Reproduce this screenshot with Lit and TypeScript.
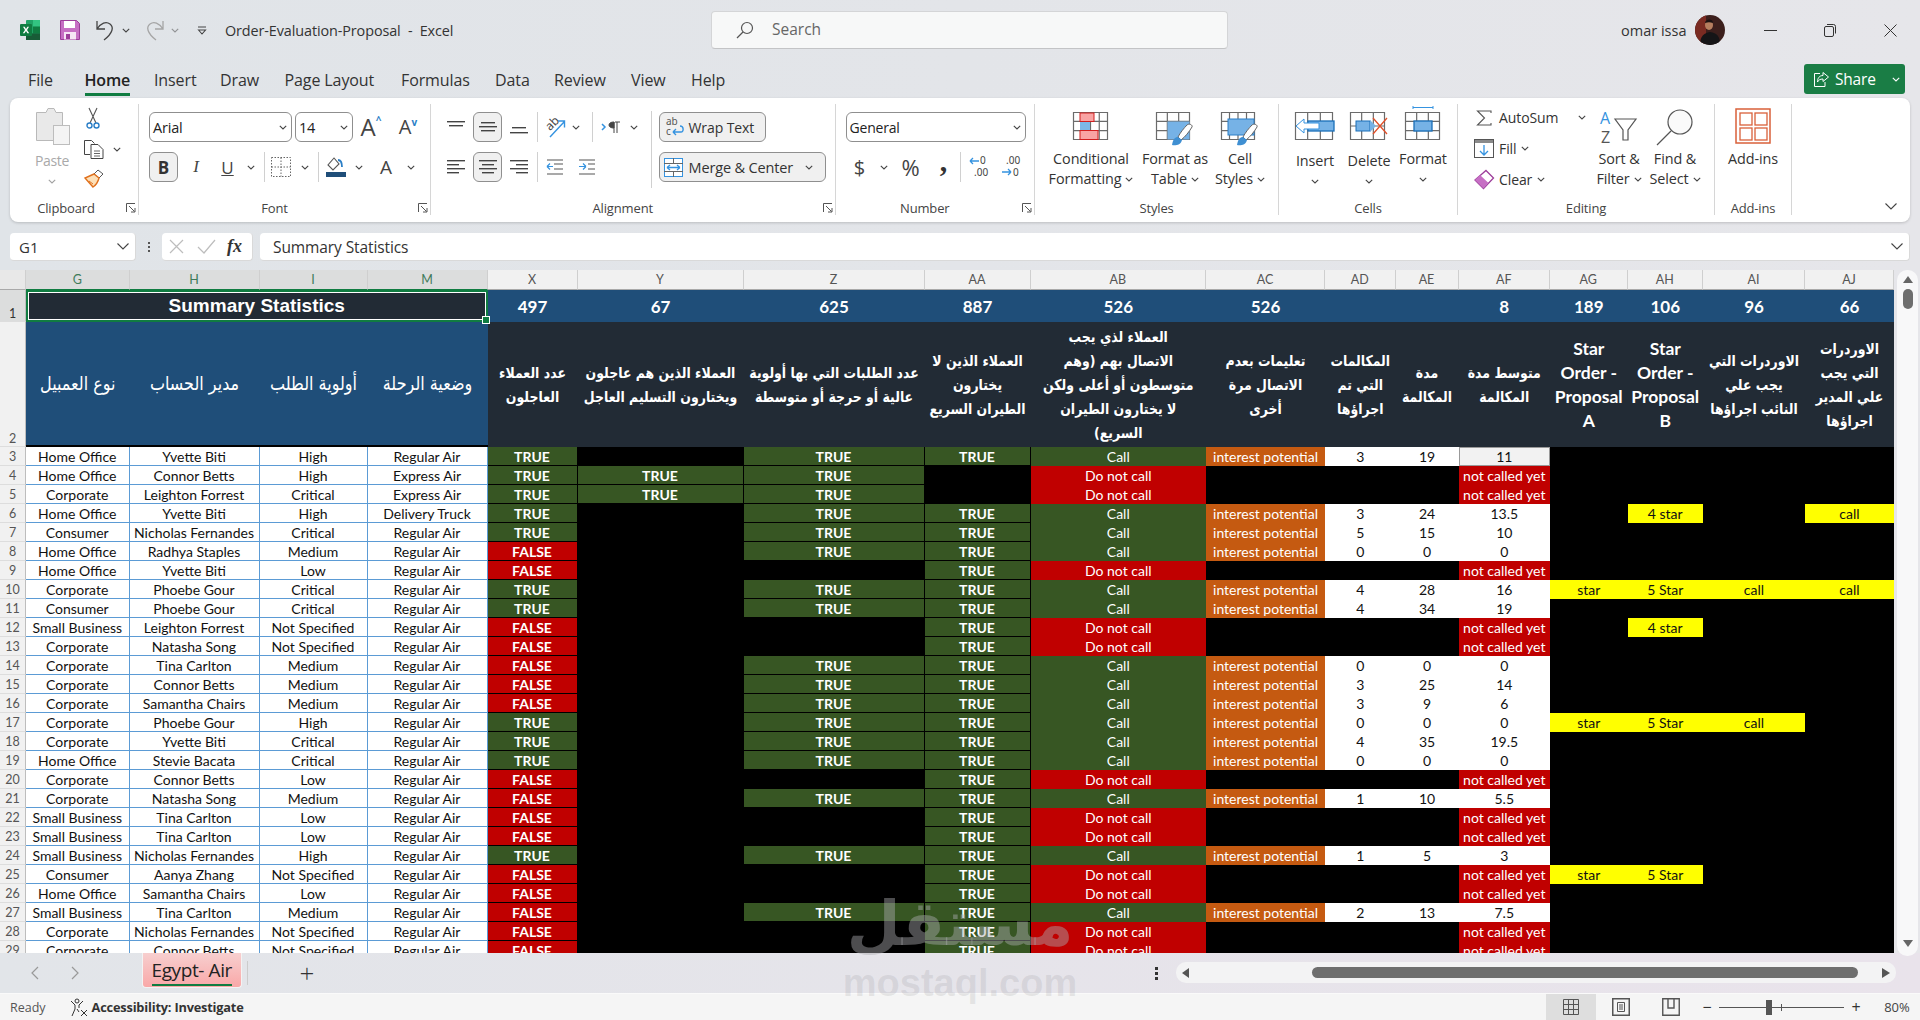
import { LitElement, css, html, svg } from "lit";
import { customElement } from "lit/decorators.js";

// one row of the sheet: [type, manager, priority, ship, X, Y, Z, AA, AB, calls, mins, avg, AG, AH, AI, AJ]
type Row = [string, string, string, string, number, number, number, number, number, string, string, string, string, string, string, string];

const R = "Regular Air";
const rows: Row[] = [
  ["Home Office", "Yvette Biti", "High", R, 1, 0, 1, 1, 1, "3", "19", "11", "", "", "", ""],
  ["Home Office", "Connor Betts", "High", "Express Air", 1, 1, 1, 0, 0, "", "", "", "", "", "", ""],
  ["Corporate", "Leighton Forrest", "Critical", "Express Air", 1, 1, 1, 0, 0, "", "", "", "", "", "", ""],
  ["Home Office", "Yvette Biti", "High", "Delivery Truck", 1, 0, 1, 1, 1, "3", "24", "13.5", "", "4 star", "", "call"],
  ["Consumer", "Nicholas Fernandes", "Critical", R, 1, 0, 1, 1, 1, "5", "15", "10", "", "", "", ""],
  ["Home Office", "Radhya Staples", "Medium", R, 0, 0, 1, 1, 1, "0", "0", "0", "", "", "", ""],
  ["Home Office", "Yvette Biti", "Low", R, 0, 0, 0, 1, 0, "", "", "", "", "", "", ""],
  ["Corporate", "Phoebe Gour", "Critical", R, 1, 0, 1, 1, 1, "4", "28", "16", "star", "5 Star", "call", "call"],
  ["Consumer", "Phoebe Gour", "Critical", R, 1, 0, 1, 1, 1, "4", "34", "19", "", "", "", ""],
  ["Small Business", "Leighton Forrest", "Not Specified", R, 0, 0, 0, 1, 0, "", "", "", "", "4 star", "", ""],
  ["Corporate", "Natasha Song", "Not Specified", R, 0, 0, 0, 1, 0, "", "", "", "", "", "", ""],
  ["Corporate", "Tina Carlton", "Medium", R, 0, 0, 1, 1, 1, "0", "0", "0", "", "", "", ""],
  ["Corporate", "Connor Betts", "Medium", R, 0, 0, 1, 1, 1, "3", "25", "14", "", "", "", ""],
  ["Corporate", "Samantha Chairs", "Medium", R, 0, 0, 1, 1, 1, "3", "9", "6", "", "", "", ""],
  ["Corporate", "Phoebe Gour", "High", R, 1, 0, 1, 1, 1, "0", "0", "0", "star", "5 Star", "call", ""],
  ["Corporate", "Yvette Biti", "Critical", R, 1, 0, 1, 1, 1, "4", "35", "19.5", "", "", "", ""],
  ["Home Office", "Stevie Bacata", "Critical", R, 1, 0, 1, 1, 1, "0", "0", "0", "", "", "", ""],
  ["Corporate", "Connor Betts", "Low", R, 0, 0, 0, 1, 0, "", "", "", "", "", "", ""],
  ["Corporate", "Natasha Song", "Medium", R, 0, 0, 1, 1, 1, "1", "10", "5.5", "", "", "", ""],
  ["Small Business", "Tina Carlton", "Low", R, 0, 0, 0, 1, 0, "", "", "", "", "", "", ""],
  ["Small Business", "Tina Carlton", "Low", R, 0, 0, 0, 1, 0, "", "", "", "", "", "", ""],
  ["Small Business", "Nicholas Fernandes", "High", R, 1, 0, 1, 1, 1, "1", "5", "3", "", "", "", ""],
  ["Consumer", "Aanya Zhang", "Not Specified", R, 0, 0, 0, 1, 0, "", "", "", "star", "5 Star", "", ""],
  ["Home Office", "Samantha Chairs", "Low", R, 0, 0, 0, 1, 0, "", "", "", "", "", "", ""],
  ["Small Business", "Tina Carlton", "Medium", R, 0, 0, 1, 1, 1, "2", "13", "7.5", "", "", "", ""],
  ["Corporate", "Nicholas Fernandes", "Not Specified", R, 0, 0, 0, 1, 0, "", "", "", "", "", "", ""],
  ["Corporate", "Connor Betts", "Not Specified", R, 0, 0, 0, 1, 0, "", "", "", "", "", "", ""],
];

const colNames = ["G", "H", "I", "M", "X", "Y", "Z", "AA", "AB", "AC", "AD", "AE", "AF", "AG", "AH", "AI", "AJ"];
const totals = ["497", "67", "625", "887", "526", "526", "", "", "8", "189", "106", "96", "66"];
const leftHeads = ["نوع العمبيل", "مدير الحساب", "أولوية الطلب", "وضعية الرحلة"];
const rightHeads: string[][] = [
  ["عدد العملاء", "العاجلون"],
  ["العملاء الذين هم عاجلون", "ويختارون التسليم العاجل"],
  ["عدد الطلبات التي بها أولوية", "عالية أو حرجة أو متوسطة"],
  ["العملاء الذين لا", "يختارون", "الطيران السريع"],
  ["العملاء لذي يجب", "الاتصال بهم (وهم", "متوسطون أو أعلى ولكن", "لا يختارون الطيران", "السريع)"],
  ["تعليمات بعدم", "الاتصال مرة", "أخرى"],
  ["المكالمات", "التي تم", "اجراؤها"],
  ["مدة", "المكالمة"],
  ["متوسط مدة", "المكالمة"],
  ["Star", "Order -", "Proposal", "A"],
  ["Star", "Order -", "Proposal", "B"],
  ["الاوردرات التي", "يجب علي", "النائب اجراؤها"],
  ["الاوردرات", "التي يجب", "علي المدير", "اجراؤها"],
];

const chev = html`<svg class="ch" width="8" height="5" viewBox="0 0 8 5"><path d="M.8.8 4 4 7.2.8" fill="none" stroke="#444" stroke-width="1.1"/></svg>`;
const launcher = html`<svg class="launch" width="10" height="10" viewBox="0 0 10 10"><path d="M.5 9V.5H9M3 3l5.5 5.5M5 9h4V5" fill="none" stroke="#555"/></svg>`;

const gridLines = (w: number, h: number, cols: number, rws: number) => {
  const xs = Array.from({ length: cols - 1 }, (_, i) => ((i + 1) * w) / cols);
  const ys = Array.from({ length: rws - 1 }, (_, i) => ((i + 1) * h) / rws);
  const d = xs.map((x) => `M${x} 0V${h}`).join("") + ys.map((y) => `M0 ${y}H${w}`).join("");
  return svg`<path d="M.5.5H${w - 0.5}V${h - 0.5}H.5Z${d}" fill="none" stroke="#6b6b6b" stroke-width="1.2"/>`;
};
const brush = svg`<path d="M31 13c-3 3-7 8-9 12l3 3c4-3 8-8 11-13 1-2-3-4-5-2Z" fill="#fff" stroke="#666"/><path d="M22 25c-3 0-5 2-6 8 3 1 9 0 10-5Z" fill="#3f8fd2"/>`;

const icons = {
  excel: html`<svg width="20" height="20" viewBox="0 0 20 20"><rect x="6" width="14" height="20" rx="1" fill="#21a366"/><rect x="13" width="7" height="6.6" fill="#33c481"/><rect x="13" y="6.6" width="7" height="6.8" fill="#107c41"/><rect x="6" y="13.4" width="14" height="6.6" fill="#185c37"/><rect y="4" width="12" height="12" rx="1" fill="#107c41"/><path d="m3 6.8 2 3.2-2.2 3.2h1.7L6 10.9l1.4 2.3h1.8L7 10l2-3.2H7.4L6 9 4.7 6.8Z" fill="#fff"/></svg>`,
  save: html`<svg width="20" height="20" viewBox="0 0 20 20"><path d="M.5.5h16l3 3v16H.5Z" fill="#c66fc4" stroke="#9c3d9a"/><rect x="4" y="1" width="11" height="7" fill="#fff"/><rect x="4" y="12" width="12" height="7.5" fill="#f6e5f5"/><rect x="6" y="14" width="4" height="5" fill="#9c3d9a"/></svg>`,
  undo: html`<svg width="20" height="22" viewBox="0 0 20 22"><path d="M1 2v8h8M1 10c4-6 9-8 13-5 4 3 3 9-6 16" fill="none" stroke="#444" stroke-width="1.3"/></svg>`,
  redo: html`<svg width="20" height="22" viewBox="0 0 20 22"><path d="M19 2v8h-8M19 10c-4-6-9-8-13-5-4 3-3 9 6 16" fill="none" stroke="#a5a5a5" stroke-width="1.3"/></svg>`,
  qat: html`<svg width="10" height="9" viewBox="0 0 10 9"><path d="M1 1h8M1.5 4 5 8l3.5-4Z" fill="none" stroke="#444" stroke-width="1.1"/></svg>`,
  search: html`<svg width="18" height="18" viewBox="0 0 18 18"><circle cx="11" cy="7" r="5.5" fill="none" stroke="#555" stroke-width="1.2"/><path d="M7 11 1 17" stroke="#555" stroke-width="1.2"/></svg>`,
  avatar: html`<svg width="30" height="30" viewBox="0 0 30 30"><defs><clipPath id="av"><ellipse cx="15" cy="15" rx="15" ry="15"/></clipPath></defs><g clip-path="url(#av)"><rect width="30" height="30" fill="#3c1f1c"/><rect width="11" height="30" fill="#7a2b22"/><path d="M5 30c0-9 4-12 10-13 7 1 10 4 10 13Z" fill="#151517"/><ellipse cx="14" cy="10" rx="4" ry="5" fill="#b57e5f"/><path d="M10 8c0-4 8-5 8 0-3-1-5-1-8 0Z" fill="#1b1111"/></g></svg>`,
  min: html`<svg width="13" height="3" viewBox="0 0 13 3"><path d="M0 1.5h13" stroke="#333" stroke-width="1"/></svg>`,
  restore: html`<svg width="12" height="13" viewBox="0 0 12 13"><rect x=".5" y="2.5" width="9" height="10" rx="1.5" fill="none" stroke="#333"/><path d="M3 .5h6.5a2 2 0 0 1 2 2v7" fill="none" stroke="#333"/></svg>`,
  close: html`<svg width="13" height="13" viewBox="0 0 13 13"><path d="m.5.5 12 12M12.5.5l-12 12" stroke="#333"/></svg>`,
  share: html`<svg width="15" height="16" viewBox="0 0 15 16"><path d="M9 1.5 14.5 6 9 10.5V8C6 8 4.5 9 3.5 11c0-4 2-6.5 5.5-6.5ZM6 2.5H.5v13H11V11" fill="none" stroke="#fff"/></svg>`,
  paste: html`<svg width="34" height="37" viewBox="0 0 34 37"><path d="M.5 4.5H10l2-4h6l2 4h6.5v28H.5Z" fill="#e9e9e9" stroke="#b9b9b9"/><rect x="17.5" y="17.5" width="16" height="19" fill="#f4f4f4" stroke="#bdbdbd"/></svg>`,
  cut: html`<svg width="14" height="21" viewBox="0 0 14 21"><path d="m3 0 7 15M11 0 4 15" stroke="#555" stroke-width="1.1"/><circle cx="3.5" cy="17.5" r="2.5" fill="none" stroke="#2b7fc7" stroke-width="1.4"/><circle cx="10.5" cy="17.5" r="2.5" fill="none" stroke="#2b7fc7" stroke-width="1.4"/></svg>`,
  copy: html`<svg width="20" height="19" viewBox="0 0 20 19"><path d="M6 14.5H.5V.5h7l3 3" fill="none" stroke="#444"/><path d="M7 4.5h7l5 5v9H7Z" fill="#fff" stroke="#444"/><path d="M10 11h6M10 13.5h6M10 16h6" stroke="#666"/></svg>`,
  painter: html`<svg width="20" height="18" viewBox="0 0 20 18"><path d="m14 0 5 4-4 4-5-4Z" fill="none" stroke="#555"/><path d="M10 4 1 8l8 9c3-2 5-5 6-9Z" fill="#fde0b8" stroke="#e0701c" stroke-width="1.4"/><path d="m5 11 4 3" stroke="#e0701c"/></svg>`,
  growA: html`<span class="glyph big">A<sup class="up">^</sup></span>`,
  shrinkA: html`<span class="glyph mid">A<sup class="dn">v</sup></span>`,
  borders: html`<svg width="20" height="20" viewBox="0 0 20 20"><path d="M.5.5h19v19H.5ZM10 .5v19M.5 10h19" fill="none" stroke="#666" stroke-dasharray="1.5 1.5"/></svg>`,
  fill: html`<svg width="20" height="20" viewBox="0 0 20 20"><path d="M8 1 2 8l5 5 6-6Z" fill="none" stroke="#555" stroke-width="1.1"/><path d="M12 3c3 0 4 2 4 7" fill="none" stroke="#2b7fc7" stroke-width="1.8"/><rect y="15" width="20" height="5" fill="#1f4e79"/></svg>`,
  orient: html`<svg width="22" height="22" viewBox="0 0 22 22"><text x="2" y="12" font-size="12" font-family="Noto Sans,sans-serif" fill="#444" transform="rotate(-45 8 9)">ab</text><path d="M6 21 20 6M14 5h6.5v6.5" fill="none" stroke="#3593e0" stroke-width="1.4"/></svg>`,
  rtl: html`<svg width="20" height="13" viewBox="0 0 20 13"><path d="m1 3 3 3-3 3" fill="none" stroke="#3593e0" stroke-width="1.5"/><path d="M14 1h5M13 1v11M16 1v11M13 1c-3 0-5 1-5 3s2 3 5 3Z" fill="#444" stroke="#444"/></svg>`,
  wrap: html`<svg width="20" height="20" viewBox="0 0 20 20"><text x="1" y="8" font-size="10" font-family="Noto Sans,sans-serif" fill="#555">ab</text><text x="1" y="18" font-size="10" font-family="Noto Sans,sans-serif" fill="#555">c</text><path d="M8 15h8c3 0 3-6-1-6M8 15l3-3M8 15l3 3" fill="none" stroke="#3593e0" stroke-width="1.4"/></svg>`,
  merge: html`<svg width="19" height="19" viewBox="0 0 19 19"><rect x=".5" y=".5" width="18" height="18" fill="#fff" stroke="#3593e0"/><path d="M0 5.5h19M0 13.5h19M9.5 0v5M9.5 14v5" stroke="#666"/><path d="M3 9.5h13M3 9.5 6 7M3 9.5 6 12M16 9.5 13 7M16 9.5 13 12" fill="none" stroke="#3593e0" stroke-width="1.3"/></svg>`,
  inc: html`<svg width="20" height="22" viewBox="0 0 20 22"><path d="M10 5H1M1 5l3-3M1 5l3 3" fill="none" stroke="#3593e0" stroke-width="1.3"/><text x="11" y="8" font-size="10" fill="#444" font-family="Noto Sans,sans-serif">0</text><text x="5" y="20" font-size="10" fill="#444" font-family="Noto Sans,sans-serif">.00</text></svg>`,
  dec: html`<svg width="20" height="22" viewBox="0 0 20 22"><text x="5" y="8" font-size="10" fill="#444" font-family="Noto Sans,sans-serif">.00</text><path d="M1 16h9M10 16l-3-3M10 16l-3 3" fill="none" stroke="#3593e0" stroke-width="1.3"/><text x="12" y="20" font-size="10" fill="#444" font-family="Noto Sans,sans-serif">0</text></svg>`,
  cond: html`<svg width="36" height="28" viewBox="0 0 36 28">${gridLines(35, 28, 4, 3)}<rect x="7" y="1" width="14" height="8.5" fill="#f9a3a3" stroke="#d21f1f"/><rect x="7" y="10" width="10" height="8.5" fill="#7db8e8"/><rect x="7" y="18.5" width="18" height="9" fill="#f9a3a3" stroke="#d21f1f"/></svg>`,
  table: html`<svg width="38" height="34" viewBox="0 0 38 34">${gridLines(34, 28, 3, 3)}<rect x="11.5" y="9.5" width="22" height="18" fill="#76b2e6"/>${brush}</svg>`,
  styles: html`<svg width="38" height="34" viewBox="0 0 38 34">${gridLines(34, 28, 4, 3)}<rect x="7" y="7" width="26" height="16" fill="#76b2e6" stroke="#2b7fc7"/>${brush}</svg>`,
  insert: html`<svg width="40" height="28" viewBox="0 0 40 28">${gridLines(38, 28, 3, 2)}<rect x="13" y="9" width="26" height="10" fill="#76b2e6" stroke="#1a6fb8" stroke-width="1.3"/><path d="M24 11H9V7L1 14l8 7v-4h15Z" fill="#fff" stroke="#3593e0"/></svg>`,
  del: html`<svg width="38" height="28" viewBox="0 0 38 28">${gridLines(35, 28, 3, 2)}<rect x="6" y="9" width="14" height="10" fill="#76b2e6" stroke="#1a6fb8"/><path d="M20 11V8l6 6-6 6v-3" fill="#76b2e6"/><path d="m23 6 14 16M37 6 23 22" stroke="#e2512a" stroke-width="1.3"/></svg>`,
  format: html`<svg width="36" height="34" viewBox="0 0 36 34"><path d="M8 1.5h20M8 0v3M28 0v3" stroke="#3593e0" fill="none"/><g transform="translate(0 6)">${gridLines(35, 28, 3, 3)}</g><rect x="9" y="15" width="18" height="10" fill="#76b2e6" stroke="#1a6fb8" stroke-width="1.3"/></svg>`,
  sum: html`<svg width="16" height="16" viewBox="0 0 16 16"><path d="M15 3V1H1.500l7 7-7 7H15v-2" fill="none" stroke="#555" stroke-width="1.1"/></svg>`,
  fillDown: html`<svg width="20" height="19" viewBox="0 0 20 19"><rect x=".5" y=".5" width="19" height="18" fill="#fff" stroke="#555"/><rect x="1" y="1" width="18" height="3" fill="#8a8a8a"/><path d="M10 6v10M6 12l4 4 4-4" fill="none" stroke="#3593e0" stroke-width="1.3"/></svg>`,
  clear: html`<svg width="20" height="19" viewBox="0 0 20 19"><path d="m12 .5 7.5 7.5-10 10.5L1 10Z" fill="#fff" stroke="#9c3d9a" stroke-width="1.3"/><path d="M1 10l5-5 8.5 8-5 5.5Z" fill="#c66fc4"/></svg>`,
  sort: html`<svg width="38" height="34" viewBox="0 0 38 34"><text x="0" y="14" font-size="16" font-family="Open Sans,sans-serif" fill="#3593e0">A</text><text x="1" y="33" font-size="16" font-family="Open Sans,sans-serif" fill="#555">Z</text><path d="M15 9h21l-8 11v10h-5V20Z" fill="none" stroke="#555" stroke-width="1.2"/></svg>`,
  find: html`<svg width="38" height="36" viewBox="0 0 38 36"><circle cx="24" cy="13" r="12" fill="#fafafa" stroke="#555" stroke-width="1.2"/><path d="M15 22 1 36" stroke="#555" stroke-width="1.2"/></svg>`,
  addins: html`<svg width="36" height="36" viewBox="0 0 36 36"><rect x="1" y="1" width="34" height="34" fill="none" stroke="#d9603a" stroke-width="1.5"/><rect x="5" y="5" width="12" height="12" fill="none" stroke="#d9603a" stroke-width="1.3"/><rect x="20" y="5" width="12" height="12" fill="none" stroke="#d9603a" stroke-width="1.3"/><rect x="5" y="20" width="12" height="12" fill="none" stroke="#d9603a" stroke-width="1.3"/><rect x="20" y="20" width="12" height="12" fill="none" stroke="#d9603a" stroke-width="1.3"/></svg>`,
  collapse: html`<svg width="12" height="7" viewBox="0 0 12 7"><path d="m.5.5 5.5 5.5L11.500.5" fill="none" stroke="#444" stroke-width="1.1"/></svg>`,
  cancel: html`<svg width="15" height="15" viewBox="0 0 15 15"><path d="m1 1 13 13M14 1 1 14" stroke="#bdbdbd" stroke-width="1.2"/></svg>`,
  enter: html`<svg width="19" height="15" viewBox="0 0 19 15"><path d="m1 8 6 6L18 1" fill="none" stroke="#bdbdbd" stroke-width="1.2"/></svg>`,
  a11y: html`<svg width="18" height="19" viewBox="0 0 18 19"><circle cx="7" cy="3" r="2" fill="none" stroke="#333"/><path d="M1 3l4 4v4l-3 7M13 3 9 7v3M7 11l2 3M11 12l6 6M17 12l-6 6" fill="none" stroke="#333"/></svg>`,
  viewNormal: html`<svg width="16" height="16" viewBox="0 0 16 16"><path d="M.5.5h15v15H.5ZM5.5.5v15M10.5.5v15M.5 5.5h15M.5 10.5h15" fill="none" stroke="#555"/></svg>`,
  viewPage: html`<svg width="18" height="18" viewBox="0 0 18 18"><rect x=".75" y=".75" width="16.5" height="16.5" fill="none" stroke="#555" stroke-width="1.5"/><path d="M5.5 4.5h7v9h-7ZM7 7h4M7 9h4M7 11h4" fill="none" stroke="#555"/></svg>`,
  viewBreak: html`<svg width="18" height="18" viewBox="0 0 18 18"><path d="M.75 0v17.25h16.5V0M.75.75h16.5M6 .75V10h6V.75" fill="none" stroke="#555" stroke-width="1.4"/></svg>`,
};

const align = (lines: number[][]) =>
  html`<svg width="20" height="18" viewBox="0 0 20 18">${lines.map(
    ([x, y, w]) => svg`<rect x=${x} y=${y} width=${w} height="1.4" fill="#444"></rect>`
  )}</svg>`;

@customElement("app-root")
export class AppRoot extends LitElement {
  static styles = css`
    :host {
      display: block;
      position: relative;
      width: 1920px;
      height: 1020px;
      overflow: hidden;
      background: linear-gradient(90deg, #e0e4e8, #e6e6ea);
      font-family: "Open Sans", "Noto Sans", sans-serif;
      color: #333;
      font-size: 13px;
    }
    svg { display: block; flex: none; overflow: visible; }

    /* title bar */
    .title { height: 60px; display: flex; align-items: center; padding-left: 20px; }
    .title .save { margin-left: 20px; }
    .title .undo { margin-left: 16px; }
    .title .und-ch { margin-left: 6px; }
    .title .redo { margin-left: 14px; }
    .title .red-ch { margin-left: 7px; opacity: 0.5; }
    .title .qat { margin-left: 18px; }
    .doc { margin-left: 18px; width: 486px; font-size: 14.4px; white-space: pre; letter-spacing: -0.1px; }
    .search {
      width: 517px; height: 38px; box-sizing: border-box; background: #f7f8f8;
      border: 1px solid #d4d5d7; border-bottom-color: #c3c4c6; border-radius: 4px;
      display: flex; align-items: center; padding-left: 24px; gap: 18px;
      color: #666; font-size: 15.5px; line-height: 34px;
    }
    .search span { margin-top: -2px; }
    .user { margin-left: auto; display: flex; align-items: center; }
    .user .name { font-size: 14.5px; width: 74px; white-space: nowrap; }
    .user .win { width: 60px; display: flex; justify-content: center; }
    .user .avatar { margin-right: 15px; }

    /* tabs */
    .tabs { height: 38px; display: flex; align-items: center; padding-left: 28px; }
    .tablist { display: grid; grid-template-columns: 56.5px 69.5px 66px 64.5px 116.5px 94px 59px 77px 60px 40px; height: 38px; flex: none; }
    .tab { font-size: 16px; line-height: 40px; letter-spacing: -0.1px; white-space: nowrap; }
    .tab.on { font-weight: 600; color: #222; letter-spacing: -0.2px; }
    .tab.on span { display: inline-block; height: 33px; border-bottom: 3px solid #107c41; line-height: 40px; }
    .sharewrap { margin-left: auto; margin-right: 15px; }
    .share {
      width: 101px; height: 30px; border-radius: 3px; background: #1a7d45; color: #fff;
      display: flex; align-items: center; padding-left: 10px; box-sizing: border-box;
      gap: 6px; font-size: 15.5px; letter-spacing: -0.2px;
    }
    .share .ch { margin-left: 10px; }
    .share .ch path { stroke: #fff; }

    /* ribbon */
    .ribbon {
      margin: 0 10px; height: 124px; background: #fff; border-radius: 8px;
      box-shadow: 0 1px 3px rgba(0, 0, 0, 0.18); display: flex; padding-top: 6px;
      box-sizing: border-box;
    }
    .group {
      height: 111px; box-sizing: border-box; border-right: 1px solid #d6d6d6;
      display: flex; flex-direction: column; flex: none;
    }
    .gbody { height: 97px; box-sizing: border-box; padding-top: 8px; display: flex; }
    .glabel { height: 14px; display: flex; align-items: center; font-size: 13px; line-height: 14px; letter-spacing: -0.15px; color: #444; margin-top: 2px; }
    .glabel span { flex: 1; text-align: center; }
    .launch { margin-right: 2px; }
    .clip { width: 129px; } .font { width: 292px; } .alignment { width: 404.5px; }
    .number { width: 199.5px; } .stylesg { width: 244px; } .cells { width: 179px; }
    .editing { width: 257px; } .addins { width: 77px; }
    .clip .glabel span { padding-right: 4px; }
    .font .glabel span, .alignment .glabel span, .number .glabel span { padding-right: 8px; }

    .clip .gbody { padding: 4px 0 0 27px; gap: 12px; }
    .pastecol { width: 34px; display: flex; flex-direction: column; align-items: center; color: #a9a9a9; margin-left: -2px; }
    .pastecol svg:first-child { margin-left: 2px; }
    .pastecol .lbl { font-size: 14px; margin-top: 6px; letter-spacing: -0.3px; }
    .pastecol .ch { margin-top: 9px; opacity: 0.5; }
    .clipcol { display: flex; flex-direction: column; gap: 11px; padding-left: 3px; }
    .clipcol .cut { margin-left: 2px; }
    .clipcol div { display: flex; align-items: center; gap: 9px; }

    .rows { display: flex; flex-direction: column; gap: 10px; }
    .row { display: grid; height: 30px; align-items: center; justify-items: center; }
    .select {
      height: 30px; box-sizing: border-box; width: 100%; border: 1px solid #8f8f8f; border-radius: 6px;
      background: #fff; display: flex; align-items: center; padding: 0 4px 0 3px;
      justify-content: space-between; font-size: 14.5px; color: #222; letter-spacing: -0.2px;
    }
    .pressed {
      width: 100%; height: 30px; box-sizing: border-box; border: 1px solid #8f8f8f;
      border-radius: 6px; background: #f0f0f0; display: flex; align-items: center; justify-content: center;
    }
    .sep { width: 1px; height: 30px; background: #d0d0d0; }
    .font .gbody { padding-left: 10px; }
    .font .r1 { grid-template-columns: 143px 61px 36px 38px; column-gap: 0; width: 278px; }
    .font .r1 .select:nth-child(2) { margin-left: 3px; width: calc(100% - 3px); }
    .font .r2 { grid-template-columns: 29px 36px 27px 20px 6px 28px 20px 6px 30px 16px 38px 12px; }
    .glyph { font-family: "Open Sans", sans-serif; color: #444; line-height: 1; }
    .big { font-size: 24px; } .mid { font-size: 20px; } .b { font-weight: 700; font-size: 17px; color: #333; }
    .glyph sup { font-size: 10px; color: #2b7fc7; vertical-align: top; font-weight: 700; line-height: 1; }
    .ital { font-style: italic; font-size: 17px; font-family: "Liberation Serif", serif; color: #444; }
    .under { font-size: 17px; text-decoration: underline; color: #444; }
    .fa { font-size: 19px; color: #444; }

    .alignment .gbody { padding-left: 14px; }
    .alignment .r1 { grid-template-columns: 22px 6px 29px 34px 2px 34px 8px 12px 1px 35px 12px; width: 206px; }
    .alignment .r2 { grid-template-columns: 22px 6px 29px 34px 2px 34px 30px; width: 206px; }
    .vsep { width: 1px; height: 77px; background: #d0d0d0; margin: -1px 6.5px 0 0; align-self: flex-start; }
    .alignbtn { width: 107px; padding: 0 6px 0 5px; gap: 4px; justify-content: flex-start; font-size: 14px; letter-spacing: -0.1px; color: #333; white-space: nowrap; }
    .alignbtn.wide { width: 167px; padding-left: 4px; gap: 6px; font-size: 14.5px; letter-spacing: -0.15px; }
    .alignbtn.wide .ch { margin-left: auto; margin-right: 6px; }

    .number .gbody { padding-left: 10px; }
    .number .select { width: 180px; font-size: 14px; }
    .number .r2 { grid-template-columns: 28px 20px 34px 32px 2px 34px 30px; }
    .dollar { font-size: 20px; color: #444; }
    .percent { font-size: 22px; color: #444; }
    .comma { font-size: 30px; color: #333; font-weight: 700; line-height: 0.7; font-family: "Liberation Serif", serif; margin-top: -14px; }

    .bigbtn { display: flex; flex-direction: column; align-items: center; flex: none; font-size: 14.4px; line-height: 20px; letter-spacing: -0.1px; color: #333; white-space: nowrap; }
    .bigbtn .ico { height: 37px; display: flex; align-items: flex-start; justify-content: center; }
    .bigbtn .t { display: flex; align-items: center; gap: 4px; }
    .bigbtn .t.lone { height: 20px; }
    .stylesg .gbody { padding-left: 13px; }
    .s1 { width: 86px; } .s2 { width: 82px; } .s3 { width: 48px; }
    .cells .gbody { padding-left: 9px; }
    .cells .bigbtn { width: 54px; }
    .cells .ins .ico { height: 39px; }
    .cells .fmt .ico { margin-top: -6px; height: 43px; }
    .editing .gbody { padding: 0 0 0 16px; }
    .editcol { width: 121px; display: flex; flex-direction: column; margin-top: -2px; }
    .editcol div { height: 31px; display: flex; align-items: center; font-size: 14px; letter-spacing: -0.1px; color: #333; }
    .editcol svg:first-child { margin-right: 5px; }
    .editcol .autosum svg:first-child { margin-left: 2px; margin-right: 7px; }
    .editcol .autosum .ch { margin-left: 20px; }
    .editcol .ch { margin-left: 5px; }
    .e1 { width: 48px; padding-top: 6px; } .e2 { width: 50px; margin-left: 7px; padding-top: 5px; }
    .e1 .ico { height: 39px; } .e2 .ico { height: 40px; }
    .addins .gbody { padding: 4px 0 0 0; justify-content: center; }
    .addins .bigbtn .ico { height: 41px; }
    .collapse { margin: auto 13px 12px auto; align-self: flex-end; }

    /* formula bar */
    .fbar { margin: 11px 10px 9px; height: 28px; display: flex; }
    .namebox, .fnbox, .fx {
      background: #fff; border-radius: 4px; border: 1px solid #d9d9d9; border-top: 0; border-left: 0;
      box-sizing: border-box; display: flex; align-items: center; height: 28px;
    }
    .namebox { width: 126px; padding: 0 6px 0 9px; justify-content: space-between; font-size: 15px; }
    .namebox svg { width: 12px; }
    .dots { width: 26px; display: flex; flex-direction: column; align-items: center; justify-content: center; gap: 2px; }
    .dots i { width: 2px; height: 2px; background: #555; display: block; }
    .fnbox { width: 91px; padding: 0 7px; gap: 13px; }
    .fn { font-family: "Liberation Serif", serif; font-style: italic; font-weight: 700; font-size: 18px; color: #333; margin-left: -2px; }
    .fx { margin-left: 7px; flex: 1; padding: 0 6px 0 13px; justify-content: space-between; font-size: 15.5px; letter-spacing: -0.1px; color: #333; }

    /* sheet */
    .sheetwrap { display: flex; height: 683px; }
    .sheet {
      width: 1894px; height: 683px; overflow: hidden; flex: none; display: grid;
      grid-template-columns: 26px 103.5px 130px 108px 120px 90px 166px 181px 106px 175.5px 119px 70.5px 63px 91.5px 77.5px 75.5px 102px 89px;
      grid-auto-rows: 19px; grid-template-rows: 20px 32px 125px;
      font-family: Lato, "Open Sans", sans-serif; font-size: 14px;
    }
    .sheet > div { box-sizing: border-box; display: flex; align-items: center; justify-content: center; white-space: nowrap; min-width: 0; }
    .colh { background: #f1f1f1; border-right: 1px solid #cfcfcf; border-bottom: 1px solid #a9a9a9; color: #555; font-size: 12.5px; }
    .colh.sel { background: #dcdddd; border-bottom: 1px solid #107c41; color: #3f7a5a; }
    .corner { background: #e8e8e8; border-right: 1px solid #cfcfcf; border-bottom: 1px solid #a9a9a9; }
    .rowh { background: #f1f1f1; color: #555; font-size: 12.5px; border-right: 1px solid #bdbdbd; border-bottom: 1px solid #ddd; padding-top: 1px; }
    .sheet > .rowh.sel { background: #dcdddd; color: #333; align-items: flex-end; }
    .sheet > .rowh.tall { align-items: flex-end; }
    .sheet > .summary {
      grid-column: span 4; background: #222b35; color: #fff; font: 700 19px "Liberation Sans", sans-serif;
      outline: 1px solid #fff; outline-offset: -3px; border: 2px solid #107c41; position: relative;
    }
    .handle { position: absolute; right: -4px; bottom: -4px; width: 6px; height: 6px; background: #107c41; border: 1px solid #fff; }
    .total { background: #1f4e79; color: #fff; font-weight: 700; font-size: 17px; }
    .hl, .hr { text-align: center; flex-direction: column; color: #fff; }
    .hl { background: #1f4e79; border-bottom: 2px solid #000; font: 400 16px/24px "DejaVu Sans", sans-serif; direction: rtl; }
    .hr { background: #222b35; font: 700 12.5px/24px "DejaVu Sans", sans-serif; direction: rtl; }
    .hl div, .hr div { transform: scaleY(1.18); }
    .hr.en { font: 700 17.5px/24px Lato, sans-serif; direction: ltr; }
    .sheet > .hr.en div { transform: none; }
    .c { background: #fff; color: #111; border-right: 1px solid #5b9bd5; border-bottom: 1px solid #5b9bd5; padding-top: 1px; }
    .blk { background: #000; }
    .g { background: #375623; color: #fff; font-weight: 700; border-right: 1px solid #000; border-bottom: 1px solid #000; padding-top: 1px; }
    .f { background: #c00000; color: #fff; font-weight: 700; border-right: 1px solid #000; border-bottom: 1px solid #000; padding-top: 1px; }
    .call { background: #375623; color: #fff; }
    .nocall { background: #c00000; color: #fff; }
    .orange { background: #c55a11; color: #fff; }
    .wh { background: #fff; color: #111; }
    .wh.active { background: #f2f2f2; border: 1px solid #999; }
    .y { background: #ff0; color: #111; }

    .vbar {
      margin-left: 3px; width: 21px; height: 686px; background: #f8f8f9; border-radius: 10px;
      display: flex; flex-direction: column; align-items: center; padding-top: 6px; box-sizing: border-box;
    }
    .tri-u { width: 0; height: 0; border: 5px solid transparent; border-bottom: 7px solid #666; border-top: 0; }
    .tri-d { width: 0; height: 0; border: 5px solid transparent; border-top: 7px solid #666; border-bottom: 0; margin-top: auto; margin-bottom: 9px; }
    .vthumb { width: 10px; height: 20px; background: #6e6e6e; border-radius: 5px; margin-top: 6px; }

    /* sheet tabs */
    .tabbar { height: 40px; display: flex; align-items: flex-start; background: linear-gradient(90deg, #e2e5e9, #e9e3eb); }
    .nav { width: 141.5px; flex: none; height: 40px; display: flex; align-items: center; padding-left: 31px; box-sizing: border-box; gap: 32px; }
    .sheettab {
      width: 100px; height: 35px; box-sizing: border-box; flex: none; border-radius: 0 0 4px 4px;
      background: linear-gradient(#f7cfcf, #f9a8a8); border: 1px solid #f3f3f3; border-top: 0;
      font-size: 19px; color: #222; display: flex; flex-direction: column; align-items: center; letter-spacing: -0.4px;
    }
    .sheettab span { margin-top: 4px; line-height: 26px; height: 27px; width: 80px; text-align: center; border-bottom: 2px solid #107c41; white-space: nowrap; }
    .tabsep { width: 1px; height: 24px; background: #ccc; margin: 8px 0 0 5px; flex: none; }
    .plus { margin-left: 52px; font-size: 26px; line-height: 40px; font-weight: 300; color: #333; width: 16px; flex: none; }
    .more { margin-left: 839px; width: 4px; height: 40px; display: flex; flex-direction: column; justify-content: center; gap: 2px; flex: none; }
    .more i { width: 3px; height: 3px; background: #333; display: block; }
    .hbar {
      margin: 9px 0 0 17px; width: 720px; height: 21px; background: #f3f3f4; border-radius: 10px; flex: none;
      display: flex; align-items: center; padding: 0 6px; box-sizing: border-box;
    }
    .tri-l { width: 0; height: 0; border: 5px solid transparent; border-right: 7px solid #555; border-left: 0; }
    .tri-r { width: 0; height: 0; border: 5px solid transparent; border-left: 8px solid #555; border-right: 0; margin-left: auto; }
    .hthumb { margin-left: 123px; width: 546px; height: 11px; background: #6e6e6e; border-radius: 6px; }

    /* status bar */
    .status { height: 27px; background: #f5f5f5; display: flex; align-items: center; font-size: 12.5px; padding-left: 10px; color: #555; border-top: 1px solid #fafafa; box-sizing: border-box; }
    .status .acc { margin-left: 24px; display: flex; align-items: center; gap: 4px; font-weight: 700; color: #333; font-size: 12.8px; letter-spacing: -0.2px; }
    .views { margin-left: auto; display: flex; align-items: center; height: 26px; }
    .views .v { width: 50px; height: 26px; display: flex; align-items: center; justify-content: center; }
    .views .v.on { background: #dedede; }
    .zoom { display: flex; align-items: center; margin-left: 5px; }
    .zoom .pm { font-size: 16px; color: #333; width: 12px; text-align: center; }
    .slider { width: 125px; height: 1px; background: #555; margin: 0 6px; position: relative; }
    .slider i { position: absolute; left: 47px; top: -7px; width: 6px; height: 15px; background: #555; }
    .slider b { position: absolute; left: 62px; top: -3px; width: 1px; height: 7px; background: #555; }
    .pct { width: 46px; text-align: center; font-size: 13px; color: #444; margin-left: 12px; }

    /* watermark lies over the sheet */
    .mark { position: absolute; left: 843px; top: 884px; width: 234px; display: flex; flex-direction: column; align-items: center; pointer-events: none; }
    .mark .ar { font: 700 62px/80px "DejaVu Sans", sans-serif; color: rgba(170, 170, 175, 0.45); direction: rtl; height: 80px; white-space: nowrap; }
    .mark .en { font: 700 38px/38px "Liberation Sans", sans-serif; color: rgba(130, 130, 135, 0.16); white-space: nowrap; }
  `;

  titleBar() {
    return html`<div class="title">
      ${icons.excel}
      <div class="save">${icons.save}</div>
      <div class="undo">${icons.undo}</div>
      <div class="und-ch">${chev}</div>
      <div class="redo">${icons.redo}</div>
      <div class="red-ch">${chev}</div>
      <div class="qat">${icons.qat}</div>
      <div class="doc">Order-Evaluation-Proposal  -  Excel</div>
      <div class="search">${icons.search}<span>Search</span></div>
      <div class="user">
        <div class="name">omar issa</div>
        <div class="avatar">${icons.avatar}</div>
        <div class="win">${icons.min}</div>
        <div class="win">${icons.restore}</div>
        <div class="win">${icons.close}</div>
      </div>
    </div>`;
  }

  tabs() {
    const names = ["File", "Home", "Insert", "Draw", "Page Layout", "Formulas", "Data", "Review", "View", "Help"];
    return html`<div class="tabs">
      <div class="tablist">
        ${names.map((n) => html`<div class="tab ${n === "Home" ? "on" : ""}"><span>${n}</span></div>`)}
      </div>
      <div class="sharewrap"><div class="share">${icons.share}<span>Share</span>${chev}</div></div>
    </div>`;
  }

  ribbon() {
    const topA = align([[1, 3, 18], [3, 7, 14]]);
    const midA = align([[3, 4, 14], [1, 8, 18], [3, 12, 14]]);
    const botA = align([[3, 9, 14], [1, 14, 18]]);
    const lA = align([[1, 2, 18], [1, 6, 12], [1, 10, 18], [1, 14, 12]]);
    const cA = align([[1, 2, 18], [4, 6, 12], [1, 10, 18], [4, 14, 12]]);
    const rA = align([[1, 2, 18], [7, 6, 12], [1, 10, 18], [7, 14, 12]]);
    const indentL = html`<svg width="18" height="16" viewBox="0 0 18 16"><path d="M1 1h16M8 5h9M8 10h9M1 15h16" fill="none" stroke="#555" stroke-width="1.1"/><path d="M7 7.5H1M1 7.5l3-3M1 7.5l3 3" fill="none" stroke="#3593e0" stroke-width="1.2"/></svg>`;
    const indentR = html`<svg width="18" height="16" viewBox="0 0 18 16"><path d="M1 1h16M10 5h7M10 10h7M1 15h16" fill="none" stroke="#555" stroke-width="1.1"/><path d="M1 7.5h7M8 7.5l-3-3M8 7.5l-3 3" fill="none" stroke="#3593e0" stroke-width="1.2"/></svg>`;
    return html`<div class="ribbon">
      <div class="group clip">
        <div class="gbody">
          <div class="pastecol">${icons.paste}<span class="lbl">Paste</span>${chev}</div>
          <div class="clipcol">
            <div class="cut">${icons.cut}</div>
            <div>${icons.copy}${chev}</div>
            <div>${icons.painter}</div>
          </div>
        </div>
        <div class="glabel"><span>Clipboard</span>${launcher}</div>
      </div>

      <div class="group font">
        <div class="gbody">
          <div class="rows">
            <div class="row r1">
              <div class="select">Arial ${chev}</div>
              <div class="select">14 ${chev}</div>
              ${icons.growA} ${icons.shrinkA}
            </div>
            <div class="row r2">
              <div class="pressed"><span class="glyph b">B</span></div>
              <span class="ital">I</span>
              <span class="under">U</span>${chev}<div class="sep"></div>
              ${icons.borders}${chev}<div class="sep"></div>
              ${icons.fill}${chev}
              <span class="fa">A</span>${chev}
            </div>
          </div>
        </div>
        <div class="glabel"><span>Font</span>${launcher}</div>
      </div>

      <div class="group alignment">
        <div class="gbody">
          <div class="rows">
            <div class="row r1">
              ${topA}<span></span><div class="pressed">${midA}</div>${botA}<div class="sep"></div>
              ${icons.orient}${chev}<span></span><div class="sep"></div>${icons.rtl}${chev}
            </div>
            <div class="row r2">
              ${lA}<span></span><div class="pressed">${cA}</div>${rA}<div class="sep"></div>${indentL}${indentR}
            </div>
          </div>
          <div class="vsep"></div>
          <div class="rows">
            <div class="pressed alignbtn">${icons.wrap}<span>Wrap Text</span></div>
            <div class="pressed alignbtn wide">${icons.merge}<span>Merge &amp; Center</span>${chev}</div>
          </div>
        </div>
        <div class="glabel"><span>Alignment</span>${launcher}</div>
      </div>

      <div class="group number">
        <div class="gbody">
          <div class="rows">
            <div class="select">General ${chev}</div>
            <div class="row r2">
              <span class="dollar">$</span>${chev}<span class="percent">%</span><span class="comma">,</span>
              <div class="sep"></div>${icons.inc}${icons.dec}
            </div>
          </div>
        </div>
        <div class="glabel"><span>Number</span>${launcher}</div>
      </div>

      <div class="group stylesg">
        <div class="gbody">
          <div class="bigbtn s1"><div class="ico">${icons.cond}</div><div>Conditional</div><div class="t">Formatting ${chev}</div></div>
          <div class="bigbtn s2"><div class="ico">${icons.table}</div><div>Format as</div><div class="t">Table ${chev}</div></div>
          <div class="bigbtn s3"><div class="ico">${icons.styles}</div><div>Cell</div><div class="t">Styles ${chev}</div></div>
        </div>
        <div class="glabel"><span>Styles</span></div>
      </div>

      <div class="group cells">
        <div class="gbody">
          <div class="bigbtn ins"><div class="ico">${icons.insert}</div><div>Insert</div><div class="t lone">${chev}</div></div>
          <div class="bigbtn ins"><div class="ico">${icons.del}</div><div>Delete</div><div class="t lone">${chev}</div></div>
          <div class="bigbtn fmt"><div class="ico">${icons.format}</div><div>Format</div><div class="t lone">${chev}</div></div>
        </div>
        <div class="glabel"><span>Cells</span></div>
      </div>

      <div class="group editing">
        <div class="gbody">
          <div class="editcol">
            <div class="autosum">${icons.sum}AutoSum${chev}</div>
            <div>${icons.fillDown}Fill${chev}</div>
            <div>${icons.clear}Clear${chev}</div>
          </div>
          <div class="bigbtn e1"><div class="ico">${icons.sort}</div><div>Sort &amp;</div><div class="t">Filter ${chev}</div></div>
          <div class="bigbtn e2"><div class="ico">${icons.find}</div><div>Find &amp;</div><div class="t">Select ${chev}</div></div>
        </div>
        <div class="glabel"><span>Editing</span></div>
      </div>

      <div class="group addins">
        <div class="gbody">
          <div class="bigbtn"><div class="ico">${icons.addins}</div><div>Add-ins</div></div>
        </div>
        <div class="glabel"><span>Add-ins</span></div>
      </div>

      <div class="collapse">${icons.collapse}</div>
    </div>`;
  }

  formulaBar() {
    return html`<div class="fbar">
      <div class="namebox"><span>G1</span>${icons.collapse}</div>
      <div class="dots"><i></i><i></i><i></i></div>
      <div class="fnbox">${icons.cancel}${icons.enter}<span class="fn">fx</span></div>
      <div class="fx"><span>Summary Statistics</span>${icons.collapse}</div>
    </div>`;
  }

  dataRow(r: Row, i: number) {
    const called = r[9] !== "";
    const flag = (on: number) =>
      on ? html`<div class="g">TRUE</div>` : html`<div class="blk"></div>`;
    const yellow = (v: string) => (v ? html`<div class="y">${v}</div>` : html`<div class="blk"></div>`);
    return html`
      <div class="rowh">${i + 3}</div>
      <div class="c">${r[0]}</div><div class="c">${r[1]}</div><div class="c">${r[2]}</div><div class="c">${r[3]}</div>
      ${r[4] ? html`<div class="g">TRUE</div>` : html`<div class="f">FALSE</div>`}
      ${flag(r[5])}${flag(r[6])}${flag(r[7])}
      ${r[8] ? html`<div class="call">Call</div>` : html`<div class="nocall">Do not call</div>`}
      ${called
        ? html`<div class="orange">interest potential</div><div class="wh">${r[9]}</div><div class="wh">${r[10]}</div>
            <div class="wh ${i === 0 ? "active" : ""}">${r[11]}</div>`
        : html`<div class="blk"></div><div class="blk"></div><div class="blk"></div><div class="nocall">not called yet</div>`}
      ${yellow(r[12])}${yellow(r[13])}${yellow(r[14])}${yellow(r[15])}
    `;
  }

  sheet() {
    return html`<div class="sheetwrap">
      <div class="sheet">
        <div class="corner"></div>
        ${colNames.map((c, i) => html`<div class="colh ${i < 4 ? "sel" : ""}">${c}</div>`)}
        <div class="rowh sel">1</div>
        <div class="summary">Summary Statistics<div class="handle"></div></div>
        ${totals.map((t) => html`<div class="total">${t}</div>`)}
        <div class="rowh tall">2</div>
        ${leftHeads.map((t) => html`<div class="hl"><div>${t}</div></div>`)}
        ${rightHeads.map(
          (lines) => html`<div class="hr ${lines[0] === "Star" ? "en" : ""}">
            ${lines.map((l) => html`<div>${l}</div>`)}
          </div>`
        )}
        ${rows.map((r, i) => this.dataRow(r, i))}
      </div>
      <div class="vbar"><div class="tri-u"></div><div class="vthumb"></div><div class="tri-d"></div></div>
    </div>`;
  }

  tabBar() {
    const left = html`<svg width="8" height="14" viewBox="0 0 8 14"><path d="M7 1 1 7l6 6" fill="none" stroke="#999" stroke-width="1.2"/></svg>`;
    const right = html`<svg width="8" height="14" viewBox="0 0 8 14"><path d="m1 1 6 6-6 6" fill="none" stroke="#999" stroke-width="1.2"/></svg>`;
    return html`<div class="tabbar">
      <div class="nav">${left}${right}</div>
      <div class="sheettab"><span>Egypt- Air</span></div>
      <div class="tabsep"></div>
      <div class="plus">+</div>
      <div class="more"><i></i><i></i><i></i></div>
      <div class="hbar"><div class="tri-l"></div><div class="hthumb"></div><div class="tri-r"></div></div>
    </div>`;
  }

  statusBar() {
    return html`<div class="status">
      <span>Ready</span>
      <div class="acc">${icons.a11y}<span>Accessibility: Investigate</span></div>
      <div class="views">
        <div class="v on">${icons.viewNormal}</div>
        <div class="v">${icons.viewPage}</div>
        <div class="v">${icons.viewBreak}</div>
      </div>
      <div class="zoom">
        <span class="pm">−</span>
        <div class="slider"><i></i><b></b></div>
        <span class="pm">+</span>
        <span class="pct">80%</span>
      </div>
    </div>`;
  }

  render() {
    return html`
      ${this.titleBar()} ${this.tabs()} ${this.ribbon()} ${this.formulaBar()} ${this.sheet()} ${this.tabBar()} ${this.statusBar()}
      <div class="mark"><div class="ar">مستقل</div><div class="en">mostaql.com</div></div>
    `;
  }
}
